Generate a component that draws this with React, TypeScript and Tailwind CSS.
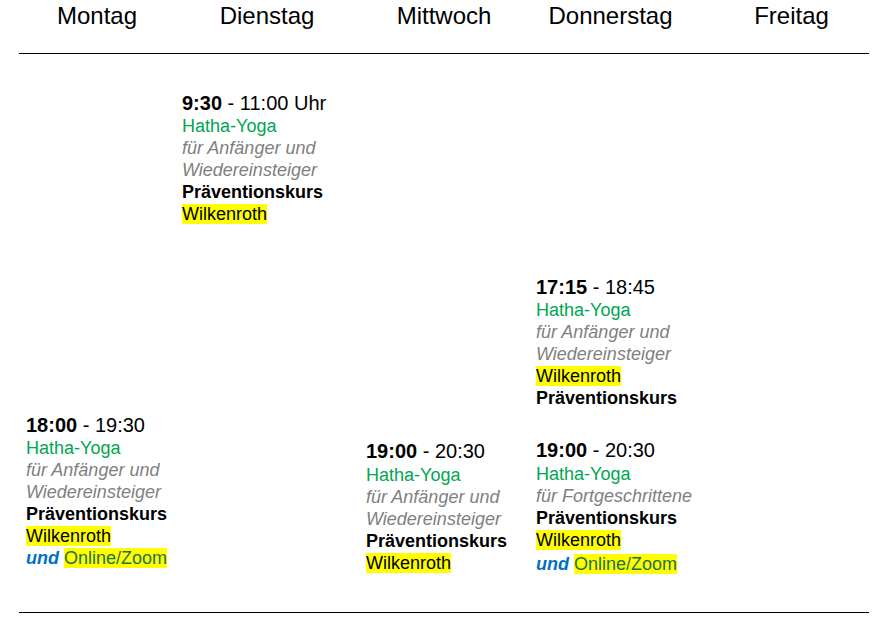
const Time = ({ from, to, tall }: { from: string; to: string; tall?: boolean }) => (
  <div className={tall ? 'text-[20px] leading-[26px] text-black' : 'text-[20px] leading-[24px] text-black'}>
    <span className="font-bold">{from}</span> - {to}
  </div>
);

const Hl = ({ children }: { children: React.ReactNode }) => (
  <span className="bg-[#ffff00]">{children}</span>
);

export default function App() {
  return (
    <div
      className="w-[881px] h-[624px] bg-white text-black"
      style={{ fontFamily: '"Liberation Sans", Arial, sans-serif' }}
    >
      <div className="ml-[19px] w-[850px]">
        {/* Header */}
        <div className="flex h-[54px] border-b border-black text-[24px] leading-[28px] pt-[2px]">
          <div className="w-[156px] text-center">Montag</div>
          <div className="w-[184px] text-center">Dienstag</div>
          <div className="w-[170px] text-center">Mittwoch</div>
          <div className="w-[163px] text-center">Donnerstag</div>
          <div className="flex-1 text-center pl-[22px]">Freitag</div>
        </div>

        {/* Body */}
        <div className="flex h-[559px] border-b border-black text-[18px] leading-[22px]">
          {/* Montag */}
          <div className="w-[156px] pl-[7px]">
            <div className="mt-[359px]">
              <Time from="18:00" to="19:30" />
              <div className="text-[#00a651]">Hatha-Yoga</div>
              <div className="italic text-[#808080]">für Anfänger und</div>
              <div className="italic text-[#808080]">Wiedereinsteiger</div>
              <div className="font-bold">Präventionskurs</div>
              <div>
                <Hl>Wilkenroth</Hl>
              </div>
              <div>
                <span className="font-bold italic text-[#0070c0]">und</span>{' '}
                <Hl>
                  <span className="text-[#1e7048]">Online/Zoom</span>
                </Hl>
              </div>
            </div>
          </div>

          {/* Dienstag */}
          <div className="w-[184px] pl-[7px]">
            <div className="mt-[37px]">
              <Time from="9:30" to="11:00 Uhr" />
              <div className="text-[#00a651]">Hatha-Yoga</div>
              <div className="italic text-[#808080]">für Anfänger und</div>
              <div className="italic text-[#808080]">Wiedereinsteiger</div>
              <div className="font-bold">Präventionskurs</div>
              <div>
                <Hl>Wilkenroth</Hl>
              </div>
            </div>
          </div>

          {/* Mittwoch */}
          <div className="w-[170px] pl-[7px]">
            <div className="mt-[384px]">
              <Time from="19:00" to="20:30" tall />
              <div className="text-[#00a651]">Hatha-Yoga</div>
              <div className="italic text-[#808080]">für Anfänger und</div>
              <div className="italic text-[#808080]">Wiedereinsteiger</div>
              <div className="font-bold">Präventionskurs</div>
              <div>
                <Hl>Wilkenroth</Hl>
              </div>
            </div>
          </div>

          {/* Donnerstag */}
          <div className="w-[163px] pl-[7px]">
            <div className="mt-[221px]">
              <Time from="17:15" to="18:45" />
              <div className="text-[#00a651]">Hatha-Yoga</div>
              <div className="italic text-[#808080]">für Anfänger und</div>
              <div className="italic text-[#808080]">Wiedereinsteiger</div>
              <div>
                <Hl>Wilkenroth</Hl>
              </div>
              <div className="font-bold">Präventionskurs</div>
            </div>
            <div className="mt-[28px]">
              <Time from="19:00" to="20:30" tall />
              <div className="text-[#00a651]">Hatha-Yoga</div>
              <div className="italic text-[#808080] whitespace-nowrap">für Fortgeschrittene</div>
              <div className="font-bold">Präventionskurs</div>
              <div>
                <Hl>Wilkenroth</Hl>
              </div>
              <div className="whitespace-nowrap mt-[2px]">
                <span className="font-bold italic text-[#0070c0]">und</span>{' '}
                <Hl>
                  <span className="text-[#1e7048]">Online/Zoom</span>
                </Hl>
              </div>
            </div>
          </div>

          {/* Freitag */}
          <div className="flex-1" />
        </div>
      </div>
    </div>
  );
}
